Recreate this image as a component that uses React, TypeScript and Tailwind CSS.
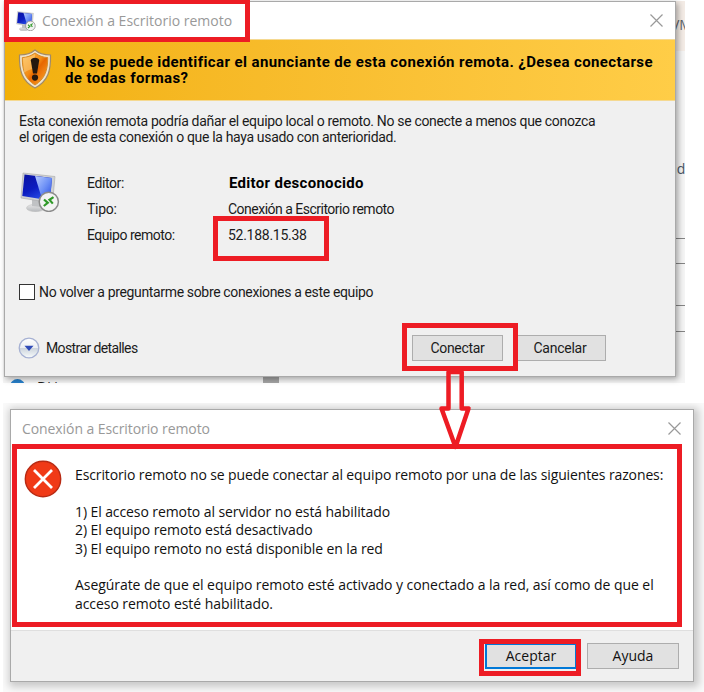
import type { ReactNode } from "react";

function CloseIcon() {
  return (
    <svg width="13" height="13" viewBox="0 0 13 13" fill="none" stroke="#999" strokeWidth="1.2">
      <path d="M.5.5 12.5 12.5M12.5.5.5 12.5" />
    </svg>
  );
}

function RemoteIcon({ className }: { className: string }) {
  return (
    <svg className={className} viewBox="0 0 40 40">
      <defs>
        <linearGradient id="screen" x1="0" x2="0.6" y1="0" y2="1">
          <stop offset="0" stopColor="#0a12a0" />
          <stop offset=".55" stopColor="#0b1cc0" />
          <stop offset="1" stopColor="#2a50ea" />
        </linearGradient>
        <linearGradient id="glare" x1="0" x2="1" y1="0" y2="1">
          <stop offset="0" stopColor="#b8ccff" />
          <stop offset=".5" stopColor="#6f92f6" />
          <stop offset="1" stopColor="#2347e0" />
        </linearGradient>
        <linearGradient id="metal" x1="0" x2="0" y1="0" y2="1">
          <stop offset="0" stopColor="#e8e8e8" />
          <stop offset="1" stopColor="#b5b8bb" />
        </linearGradient>
      </defs>
      <ellipse cx="15.500" cy="36" rx="9" ry="3.700" fill="url(#metal)" stroke="#bbb" strokeWidth=".5" />
      <path d="m12 26 9 2v7l-9-1Z" fill="#c0c2c4" />
      <path d="M3 1 35 4.500 32.500 31 1 26Z" fill="#cfd1d3" stroke="#aaa" strokeWidth=".6" />
      <path d="M4.500 2.500 32 6 30 28.500 2.300 24Z" fill="url(#screen)" />
      <path d="M15 4 32 6 30 28.500 22 27Z" fill="url(#glare)" />
      <circle cx="28.800" cy="29.800" r="9.600" fill="#f3f3f3" stroke="#8b8b8b" strokeWidth="1.500" />
      <path d="m24 27.500 3.800 3.300-4 3.200M33.500 25.200l-4 2.600 3.300 3.800" fill="none" stroke="#2f9928" strokeWidth="2.200" />
    </svg>
  );
}

function ShieldIcon() {
  return (
    <svg width="34" height="40" viewBox="0 0 34 40">
      <defs>
        <linearGradient id="shield" x1="0" x2="1" y1="0" y2="1">
          <stop offset="0" stopColor="#ffbd55" />
          <stop offset=".45" stopColor="#f38b13" />
          <stop offset=".55" stopColor="#e76700" />
          <stop offset="1" stopColor="#ffae32" />
        </linearGradient>
      </defs>
      <path d="M17 1c4 3.500 9 5 15.500 5 .4 15-2 26-15.500 33C3.500 32 1.100 21 1.500 6 8 6 13 4.500 17 1Z" fill="#efe3cd" stroke="#a08a68" strokeWidth="1.200" />
      <path d="M17 4c4 3 8 4.300 12.700 4.600C29.800 21 27 30 17 36 7 30 4.200 21 4.300 8.600 9 8.300 13 7 17 4Z" fill="url(#shield)" stroke="#d98a22" />
      <path d="M5 9c5-.4 8.500-1.800 12-4v15C12 20 8 22 6 24Z" fill="#ffe09b" opacity=".4" />
      <path d="M12.800 11.500c0-3.800 8.400-3.800 8.400 0L19 24.500h-4Z" fill="#24180f" />
      <circle cx="17" cy="28.600" r="3.100" fill="#24180f" />
    </svg>
  );
}

function ErrorIcon() {
  return (
    <svg width="38" height="38" viewBox="0 0 38 38">
      <circle cx="19" cy="19" r="17.700" fill="#f03a17" stroke="#b82a13" strokeWidth="1.400" />
      <path d="m10 10 18 18M28 10 10 28" stroke="#fff" strokeWidth="2.800" />
    </svg>
  );
}

function ExpandIcon() {
  return (
    <svg width="22" height="22" viewBox="0 0 22 22">
      <defs>
        <linearGradient id="expand" x1="0" x2="0" y1="0" y2="1">
          <stop stopColor="#fff" />
          <stop offset=".48" stopColor="#eceff3" />
          <stop offset=".5" stopColor="#cbd3dc" />
          <stop offset="1" stopColor="#f8fbfb" />
        </linearGradient>
      </defs>
      <circle cx="11" cy="11" r="9.800" fill="url(#expand)" stroke="#a6b1d3" strokeWidth="1.300" />
      <path d="M6.500 8.800h9L11 14Z" fill="#304bb7" />
    </svg>
  );
}

function Line({ children, className = "" }: { children: ReactNode; className?: string }) {
  return <div className={`whitespace-nowrap ${className}`}>{children}</div>;
}

function Backdrop() {
  return (
    <div className="absolute left-[3px] top-px h-[382px] w-[682px] overflow-hidden bg-[#f5f5f5] font-['Open_Sans',sans-serif] text-[14px]">
      <div className="absolute right-0 top-0 h-[50px] w-4 bg-[#f4ece6]" />
      <span className="absolute left-[668px] top-[13px] text-[#5c6268]">VM</span>
      <span className="absolute left-[666px] top-[157px] text-[#4b5565]">ad</span>
      <div className="absolute right-0 top-[237px] h-px w-4 bg-[#858585]" />
      <div className="absolute right-0 top-[262px] h-px w-4 bg-[#858585]" />
      <div className="absolute right-0 top-[304px] h-px w-4 bg-[#858585]" />
      <div className="absolute right-0 top-[330px] h-px w-4 bg-[#858585]" />
      <div className="absolute left-[7px] top-[378px] h-4 w-[15px] rounded-full bg-[#277fc9]" />
      <span className="absolute left-[34px] top-[375px] text-[#202020]">Di i</span>
      <div className="absolute left-[260px] top-[375px] h-2 w-4 bg-[#a5a5a5]" />
    </div>
  );
}

function WarningDialog() {
  return (
    <section className="relative ml-1 mt-px flex h-[376px] w-[672px] flex-col border border-[#a9a9a9] bg-[#f0f0f0] font-[Roboto,sans-serif] text-[14px] leading-[16px] text-[#1b1b1b] shadow-[2px_2px_6px_rgba(0,0,0,0.35)]">
      <header className="flex h-[37px] shrink-0 items-center bg-white pl-[11px] pr-[12px] font-['Open_Sans',sans-serif] text-[#999]">
        <RemoteIcon className="mr-[6px] size-[20px]" />
        <Line className="text-[14px]">Conexión a Escritorio remoto</Line>
        <span className="ml-auto"><CloseIcon /></span>
      </header>
      <div className="flex h-[62px] shrink-0 items-start border-y border-[#f5d991] bg-linear-to-r from-[#f2b009] to-[#ffcd47] pl-[13px] pt-[9px]">
        <ShieldIcon />
        <div className="ml-[13px] mt-[5px] text-[15px] font-bold tracking-[0.4px] text-black">
          <Line>No se puede identificar el anunciante de esta conexión remota. ¿Desea conectarse</Line>
          <Line>de todas formas?</Line>
        </div>
      </div>
      <div className="pl-[14px] pt-[12px] tracking-[-0.33px]">
        <Line>Esta conexión remota podría dañar el equipo local o remoto. No se conecte a menos que conozca</Line>
        <Line>el origen de esta conexión o que la haya usado con anterioridad.</Line>
      </div>
      <div className="mt-[26px] flex pl-[15px]">
        <RemoteIcon className="mt-px size-[40px]" />
        <div className="ml-[27px] mt-[-1px] grid grid-cols-[141px_auto] leading-[26px]">
          <Line className="tracking-[-0.4px]">Editor:</Line>
          <Line className="ml-px text-[15px] font-bold tracking-[0.3px] text-black">Editor desconocido</Line>
          <Line className="tracking-[-0.3px]">Tipo:</Line>
          <Line className="tracking-[-0.51px]">Conexión a Escritorio remoto</Line>
          <Line className="tracking-[-0.47px]">Equipo remoto:</Line>
          <Line className="tracking-[-0.27px]">52.188.15.38</Line>
        </div>
      </div>
      <div className="mt-[36px] flex items-center pl-[14px]">
        <div className="size-[16px] border border-[#333] bg-white" />
        <Line className="ml-1 tracking-[-0.35px]">No volver a preguntarme sobre conexiones a este equipo</Line>
      </div>
      <footer className="mt-[35px] flex h-[26px] items-center pl-[13px]">
        <ExpandIcon />
        <Line className="ml-[6px] tracking-[-0.61px]">Mostrar detalles</Line>
        <button className="ml-auto h-[26px] w-[91px] border border-[#adadad] bg-[#e1e1e1] tracking-[-0.3px]">Conectar</button>
        <button className="ml-[11px] mr-[69px] h-[26px] w-[92px] border border-[#adadad] bg-[#e1e1e1] tracking-[-0.25px]">Cancelar</button>
      </footer>
    </section>
  );
}

function ErrorDialog() {
  return (
    <div className="ml-[3px] mt-[26px] h-[289px] w-[701px] overflow-hidden bg-[#fafafa] pl-[7px] pt-[6px]">
      <section className="flex h-[273px] w-[684px] flex-col border border-[#a9a9a9] bg-white font-['Open_Sans',sans-serif] text-[14px] text-[#111] shadow-[2px_2px_8px_3px_rgba(0,0,0,0.2)]">
        <header className="flex h-[37px] shrink-0 items-center pl-[11px] pr-[12px] text-[#999]">
          <Line className="tracking-[-0.08px]">Conexión a Escritorio remoto</Line>
          <span className="ml-auto"><CloseIcon /></span>
        </header>
        <div className="flex flex-1 pl-[13px] pt-[13px]">
          <ErrorIcon />
          <div className="ml-[13px] mt-[6px] leading-[18.4px] tracking-[-0.12px]">
            <Line>Escritorio remoto no se puede conectar al equipo remoto por una de las siguientes razones:</Line>
            <div className="mt-[18.4px] tracking-[-0.09px]">
              <Line>1) El acceso remoto al servidor no está habilitado</Line>
              <Line>2) El equipo remoto está desactivado</Line>
              <Line>3) El equipo remoto no está disponible en la red</Line>
            </div>
            <div className="mt-[18.4px] tracking-[-0.06px]">
              <Line>Asegúrate de que el equipo remoto esté activado y conectado a la red, así como de que el</Line>
              <Line>acceso remoto esté habilitado.</Line>
            </div>
          </div>
        </div>
        <footer className="flex h-[51px] shrink-0 items-center justify-end gap-[10px] border-t border-[#dfdfdf] bg-[#f0f0f0] pr-[14px]">
          <button className="h-[26px] w-[92px] border-2 border-[#0078d7] bg-[#e1e1e1] leading-[20px]">Aceptar</button>
          <button className="h-[26px] w-[92px] border border-[#adadad] bg-[#e1e1e1] leading-[20px]">Ayuda</button>
        </footer>
      </section>
    </div>
  );
}

function Annotations() {
  return (
    <>
      <div className="absolute left-[4px] top-0 h-[42px] w-[246px] border-[5px] border-t-4 border-[#ed1c24]" />
      <div className="absolute left-[213px] top-[216px] h-[45px] w-[116px] border-[5px] border-[#ed1c24]" />
      <div className="absolute left-[402px] top-[323px] h-[48px] w-[116px] border-[5px] border-[#ed1c24]" />
      <div className="absolute left-[12px] top-[444px] h-[183px] w-[670px] border-[5px] border-[#ed1c24]" />
      <div className="absolute left-[479px] top-[639px] h-[37px] w-[102px] border-[5px] border-[#ed1c24]" />
      <svg className="absolute left-[438px] top-[369px]" width="34" height="82" viewBox="0 0 34 82" fill="none" stroke="#ed1c24" strokeWidth="4.500" strokeLinejoin="round">
        <path d="M10.500 3V39.500H3.500L17.500 78 30.500 39.500H23.700V3Z" />
      </svg>
    </>
  );
}

export default function App() {
  return (
    <main className="relative flow-root h-[692px] w-[704px] overflow-hidden bg-white">
      <Backdrop />
      <WarningDialog />
      <ErrorDialog />
      <Annotations />
    </main>
  );
}
